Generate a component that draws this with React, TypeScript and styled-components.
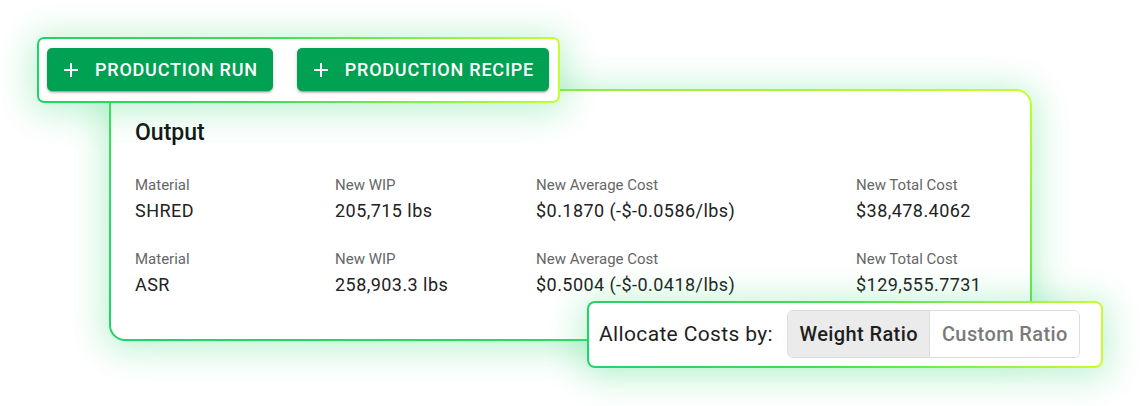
import React from "react";
import styled, { createGlobalStyle } from "styled-components";

const GlobalStyle = createGlobalStyle`
  html, body { margin: 0; padding: 0; background: #ffffff; }
  body { font-family: Roboto, "Noto Sans", Arial, sans-serif; -webkit-font-smoothing: antialiased; }
`;

const Canvas = styled.div`
  position: relative;
  width: 1140px;
  height: 406px;
  overflow: hidden;
  background: #ffffff;
`;

const Floating = styled.div<{ $left: number; $top: number; $radius: number; $angle: string; $z: number }>`
  position: absolute;
  left: ${(p) => p.$left}px;
  top: ${(p) => p.$top}px;
  z-index: ${(p) => p.$z};
  box-sizing: border-box;
  border: 2px solid transparent;
  border-radius: ${(p) => p.$radius}px;
  background:
    linear-gradient(#ffffff, #ffffff) padding-box,
    linear-gradient(${(p) => p.$angle}, #1fd36b 0%, #3ddf5c 45%, #c6ff2b 100%) border-box;
  box-shadow: 0 4px 34px 6px rgba(45, 215, 110, 0.3);
`;

const ButtonBar = styled(Floating)`
  display: flex;
  gap: 24px;
  padding: 9px 9px 10px 8px;
`;

const ActionButton = styled.button`
  display: flex;
  align-items: center;
  gap: 12px;
  height: 43px;
  padding: 0 15px 0 12px;
  border: none;
  border-radius: 5px;
  background: #00a152;
  color: #ffffff;
  font-family: Roboto, sans-serif;
  font-weight: 500;
  font-size: 18px;
  letter-spacing: 0.78px;
  text-transform: uppercase;
  white-space: nowrap;
  box-shadow: 0 3px 1px -2px rgba(0, 0, 0, 0.2), 0 2px 2px 0 rgba(0, 0, 0, 0.14),
    0 1px 5px 0 rgba(0, 0, 0, 0.12);
  cursor: pointer;
  svg { flex: none; }
`;

const OutputCard = styled(Floating)`
  width: 923px;
  height: 252px;
  padding: 28px 24px 0 24px;
`;

const Title = styled.h2`
  margin: 0;
  font-size: 23px;
  line-height: 28px;
  font-weight: 500;
  color: #141414;
`;

const Rows = styled.div`
  display: flex;
  flex-direction: column;
  gap: 26px;
  margin-top: 28px;
`;

const Row = styled.div`
  display: grid;
  grid-template-columns: 200px 201px 320px auto;
`;

const Field = styled.div`
  display: flex;
  flex-direction: column;
  gap: 4px;
`;

const Label = styled.span`
  font-size: 15px;
  line-height: 20px;
  color: #666666;
`;

const Value = styled.span`
  font-size: 18px;
  line-height: 24px;
  letter-spacing: 0.45px;
  color: #222222;
`;

const AllocateBar = styled(Floating)`
  display: flex;
  align-items: center;
  gap: 14px;
  padding: 7px 21px 8px 10px;
`;

const AllocateLabel = styled.span`
  font-size: 21px;
  letter-spacing: 0.35px;
  color: #1f1f1f;
  white-space: nowrap;
`;

const Toggle = styled.div`
  display: flex;
  height: 48px;
  border: 1px solid #dcdcdc;
  border-radius: 6px;
  overflow: hidden;
  box-sizing: border-box;
`;

const ToggleOption = styled.button<{ $active?: boolean }>`
  display: flex;
  align-items: center;
  padding: 0 11.5px;
  border: none;
  border-left: ${(p) => (p.$active ? "none" : "1px solid #dcdcdc")};
  background: ${(p) => (p.$active ? "#ebebeb" : "#ffffff")};
  color: ${(p) => (p.$active ? "#1e1e1e" : "#7a7a7a")};
  font-family: Roboto, sans-serif;
  font-size: 20px;
  font-weight: 500;
  letter-spacing: 0.4px;
  white-space: nowrap;
  cursor: pointer;
`;

const PlusIcon = () => (
  <svg width="24" height="24" viewBox="0 0 24 24" fill="none" stroke="currentColor" strokeWidth="2" strokeLinecap="butt">
    <path d="M5 12h14" />
    <path d="M12 5v14" />
  </svg>
);

const rows = [
  { material: "SHRED", wip: "205,715 lbs", avg: "$0.1870 (-$-0.0586/lbs)", total: "$38,478.4062" },
  { material: "ASR", wip: "258,903.3 lbs", avg: "$0.5004 (-$-0.0418/lbs)", total: "$129,555.7731" },
];

export default function App() {
  return (
    <>
      <GlobalStyle />
      <Canvas>
        <OutputCard $left={109} $top={89} $radius={16} $angle="to top right" $z={1}>
          <Title>Output</Title>
          <Rows>
            {rows.map((r) => (
              <Row key={r.material}>
                <Field>
                  <Label>Material</Label>
                  <Value>{r.material}</Value>
                </Field>
                <Field>
                  <Label>New WIP</Label>
                  <Value>{r.wip}</Value>
                </Field>
                <Field>
                  <Label>New Average Cost</Label>
                  <Value>{r.avg}</Value>
                </Field>
                <Field>
                  <Label>New Total Cost</Label>
                  <Value>{r.total}</Value>
                </Field>
              </Row>
            ))}
          </Rows>
        </OutputCard>
        <ButtonBar $left={37} $top={37} $radius={7} $angle="to right" $z={2}>
          <ActionButton>
            <PlusIcon />
            Production Run
          </ActionButton>
          <ActionButton>
            <PlusIcon />
            Production Recipe
          </ActionButton>
        </ButtonBar>
        <AllocateBar $left={587} $top={301} $radius={8} $angle="to right" $z={2}>
          <AllocateLabel>Allocate Costs by:</AllocateLabel>
          <Toggle>
            <ToggleOption $active>Weight Ratio</ToggleOption>
            <ToggleOption>Custom Ratio</ToggleOption>
          </Toggle>
        </AllocateBar>
      </Canvas>
    </>
  );
}
